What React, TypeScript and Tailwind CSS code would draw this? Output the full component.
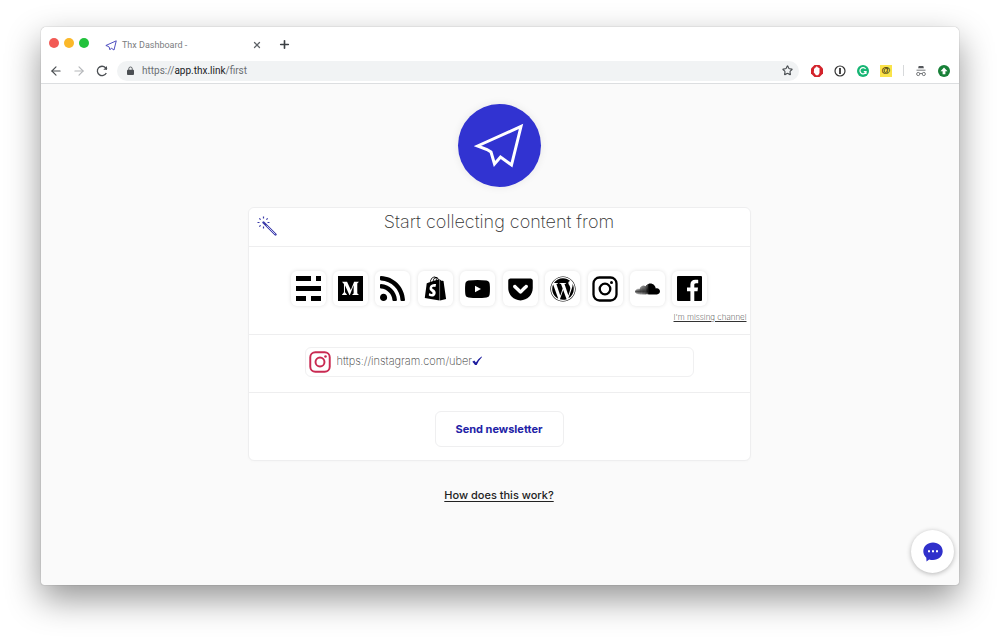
import React from "react";
import {
  FaMedium,
  FaRss,
  FaShopify,
  FaGetPocket,
  FaWordpress,
  FaSoundcloud,
} from "react-icons/fa";
import { ArrowLeft, ArrowRight, Plus, Star, X } from "lucide-react";

function PlaneIcon({ className, stroke }: { className: string; stroke: number }) {
  return (
    <svg viewBox="0 0 50 46" className={className} fill="none" stroke="currentColor" strokeWidth={stroke} aria-hidden="true">
      <path d="M3.500 23 47 3.500 37.500 42 26.500 34 20.500 41 17 29 13 26.500Z" />
    </svg>
  );
}

function TildaIcon() {
  return (
    <svg viewBox="0 0 25 25" className="size-[25px]" fill="currentColor" aria-hidden="true">
      <path d="M0 0h15v5H0zM20 0h5v5h-5zM0 10h25v5H0zM0 20h10v5H0zM15 20h10v5H15z" />
    </svg>
  );
}

function YoutubeIcon() {
  return (
    <svg viewBox="0 0 25 18" className="h-[18px] w-[25px]" aria-hidden="true">
      <path fill="currentColor" d="M3.500.5Q12.500-.500 21.500.500Q24.500 1 24.700 4Q25.200 9 24.700 14Q24.500 17 21.500 17.500Q12.500 18.500 3.500 17.500Q.5 17 .3 14Q-.2 9 .3 4Q.5 1 3.500.5Z" />
      <path fill="#fff" d="m10 5.800 6 3.200-6 3.200Z" />
    </svg>
  );
}

function InstagramIcon({ className }: { className: string }) {
  return (
    <svg viewBox="0 0 26 26" className={className} fill="none" stroke="currentColor" strokeWidth="2.300" aria-hidden="true">
      <rect x="1.500" y="1.500" width="23" height="23" rx="6" />
      <circle cx="13" cy="13" r="5.300" />
      <circle cx="19.500" cy="6.500" r="1.500" fill="currentColor" stroke="none" />
    </svg>
  );
}

function FacebookIcon() {
  return (
    <svg viewBox="0 0 25 25" className="size-[25px]" aria-hidden="true">
      <path fill="currentColor" d="M1 0h23q1 0 1 1v23q0 1-1 1H17.300v-9.700h3.200l.5-3.800h-3.700V9.100c0-1.100.3-1.800 1.900-1.800h2V3.900c-.4 0-1.500-.1-2.900-.1-2.900 0-4.900 1.700-4.900 5v2.700H10v3.800h3.400V25H1q-1 0-1-1V1q0-1 1-1Z" />
    </svg>
  );
}

function WandIcon() {
  return (
    <svg viewBox="0 0 20 20" className="size-5 text-[#3a3aa8]" fill="none" stroke="currentColor" aria-hidden="true">
      <path d="m6.500 6.500 12 12" strokeWidth="2.400" strokeLinecap="round" />
      <path d="m9.500 9.500 8.700 8.700" stroke="#c9c9f2" strokeWidth="1" />
      <path d="M6.500.5v2M6.500 10.500v2M.5 6.500h2M10.500 6.500h2M2.300 2.300l1.300 1.300M10.700 2.300 9.400 3.600M2.300 10.700l1.300-1.300" strokeWidth="1.200" />
    </svg>
  );
}

const channels: { name: string; icon: React.ReactNode }[] = [
  { name: "Tilda", icon: <TildaIcon /> },
  { name: "Medium", icon: <FaMedium className="h-[29px] w-[25px]" /> },
  { name: "RSS", icon: <FaRss className="h-[29px] w-[25px]" /> },
  { name: "Shopify", icon: <FaShopify className="size-[25px]" /> },
  { name: "YouTube", icon: <YoutubeIcon /> },
  { name: "Pocket", icon: <FaGetPocket className="h-[28px] w-[25px]" /> },
  { name: "WordPress", icon: <FaWordpress className="size-[26px]" /> },
  { name: "Instagram", icon: <InstagramIcon className="size-[26px]" /> },
  { name: "SoundCloud", icon: <FaSoundcloud className="h-5 w-[25px]" /> },
  { name: "Facebook", icon: <FacebookIcon /> },
];

function BrowserChrome() {
  return (
    <header className="border-b border-[#dcdee0] bg-white font-[Roboto,sans-serif]">
      <div className="flex h-[31px] items-end pb-1">
        <div className="flex w-[63px] gap-[5px] pb-[6px] pl-2">
          <span className="size-[10px] rounded-full bg-[#f25a55]" />
          <span className="size-[10px] rounded-full bg-[#fbb829]" />
          <span className="size-[10px] rounded-full bg-[#22c23c]" />
        </div>
        <div className="flex w-[160px] items-center text-[#7b7d80]">
          <PlaneIcon className="mr-[5px] ml-px h-[11px] w-3 text-[#4646bd]" stroke={4} />
          <span className="flex-1 text-[9px] leading-[18px]">Thx Dashboard -</span>
          <button aria-label="Close tab" className="mr-[2px] text-[#5f6368]">
            <X size={10} strokeWidth={3} />
          </button>
        </div>
        <button aria-label="New tab" className="mb-[3px] ml-[14px] text-[#3c4043]">
          <Plus size={13} strokeWidth={3} />
        </button>
      </div>
      <div className="flex h-[25px] items-center pr-[9px] pl-2 text-[#4b4f53]">
        <button aria-label="Back"><ArrowLeft size={14} /></button>
        <button aria-label="Forward" className="ml-[9px] text-[#b5b7ba]"><ArrowRight size={14} /></button>
        <button aria-label="Reload" className="ml-[9px]">
          <svg viewBox="0 0 14 14" className="size-[14px]" fill="none" stroke="currentColor" strokeWidth="1.300">
            <path d="M11.300 9a4.700 4.700 0 1 1-.8-5.300L12 5.200" />
            <path d="M12 2v3.700H8.300Z" fill="currentColor" stroke="none" />
          </svg>
        </button>
        <div className="ml-2 flex h-5 flex-1 items-center rounded-full bg-[#f1f3f4] pr-[6px] pl-[10px]">
          <svg viewBox="0 0 8 10" className="mr-2 h-[9px] w-[7px]" aria-hidden="true">
            <path fill="currentColor" d="M1 4h6q1 0 1 1v4q0 1-1 1H1Q0 10 0 9V5q0-1 1-1Z" />
            <path d="M2 4.500V3a2 2 0 0 1 4 0v1.500" fill="none" stroke="currentColor" />
          </svg>
          <span className="flex-1 text-[10px] text-[#6b6f73]">
            https://<span className="text-[#202124]">app.thx.link</span>/first
          </span>
          <button aria-label="Bookmark"><Star size={11} strokeWidth={2.5} /></button>
        </div>
        <div className="ml-3 flex items-center gap-[11px]">
          <svg viewBox="0 0 12 12" className="size-3" aria-hidden="true">
            <path fill="#d3232b" d="M3.500 0h5L12 3.500v5L8.500 12h-5L0 8.500v-5Z" />
            <path fill="#fff" d="M3 6V3.500h.9V2.400h1.200v-.9h1.200v.7h1.100v.9h1.100v5L7.200 10.200H5L2.700 7.200Z" />
          </svg>
          <svg viewBox="0 0 12 12" className="size-3" fill="none" stroke="#333" aria-hidden="true">
            <circle cx="6" cy="6" r="5" strokeWidth="1.200" />
            <path d="M6 3v6" strokeWidth="1.800" />
          </svg>
          <svg viewBox="0 0 12 12" className="size-3" fill="none" aria-hidden="true">
            <circle cx="6" cy="6" r="6" fill="#15b573" />
            <path d="M8.600 4A3.100 3.100 0 1 0 9 6.700H6.800M9 6.500v2.400" stroke="#fff" strokeWidth="1.200" />
          </svg>
          <span className="flex size-3 items-center justify-center bg-[#fae34a] font-['Liberation_Sans',sans-serif] text-[9px] leading-none font-bold text-[#2f2708]">@</span>
          <span className="h-[11px] w-px bg-[#d7d9db]" />
          <svg viewBox="0 0 12 12" className="size-3" fill="none" stroke="#6a6d70" strokeWidth=".9" aria-hidden="true">
            <path d="M3.700 1h4.600l.6 2.200H3.100Z" fill="#55585c" stroke="none" />
            <path d="M1.500 5.200h9M4.700 8.800q1.300-1 2.600 0" />
            <circle cx="3.200" cy="9" r="1.600" />
            <circle cx="8.800" cy="9" r="1.600" />
          </svg>
          <svg viewBox="0 0 12 12" className="size-3" aria-hidden="true">
            <circle cx="6" cy="6" r="6" fill="#188038" />
            <path d="m6 2.500 3.500 3.800H7.400v2.900H4.600V6.300H2.500Z" fill="#fff" />
          </svg>
        </div>
      </div>
    </header>
  );
}

export default function App() {
  return (
    <div className="flex min-h-screen bg-white px-[41px] pt-[27px] pb-[53px] font-[Inter,sans-serif]">
      <div className="relative flex flex-1 flex-col overflow-hidden rounded-[5px] rounded-b-[3px] bg-[#fafafa] shadow-[0_0_1px_rgba(0,0,0,0.5),0_14px_34px_rgba(0,0,0,0.42)]">
        <BrowserChrome />
        <main className="flex flex-1 flex-col items-center pt-5 pr-[2px]">
          <div className="flex size-[83px] items-center justify-center rounded-full bg-[#3133d1] shadow-[0_0_8px_rgba(0,0,0,0.08)]">
            <PlaneIcon className="h-[46px] w-[50px] text-white" stroke={3} />
          </div>

          <section className="mt-5 w-[503px] max-w-full divide-y divide-[#eeeeef] rounded-md border border-[#eeeeef] bg-white shadow-[0_1px_3px_rgba(0,0,0,0.02)]">
            <div className="grid h-[39px] grid-cols-[1fr_auto_1fr] items-start">
              <div className="pt-2 pl-2"><WandIcon /></div>
              <h1 className="pt-px text-[18px] leading-[26px] font-extralight text-[#333]">Start collecting content from</h1>
            </div>
            <div className="flex h-[88px] flex-col items-center pt-6">
              <div className="flex w-[417px] justify-between">
                {channels.map((c) => (
                  <button
                    key={c.name}
                    aria-label={c.name}
                    className="flex size-[35px] items-center justify-center rounded-md bg-white text-black shadow-[0_0_4px_rgba(0,0,0,0.12)]"
                  >
                    {c.icon}
                  </button>
                ))}
              </div>
              <a href="#missing" className="mt-[5px] mr-[3px] self-end text-[8px] leading-3 font-extralight text-[#333] underline">
                I'm missing channel
              </a>
            </div>
            <div className="flex h-[58px] justify-center pt-3">
              <label className="flex h-[30px] w-[389px] items-center rounded-md border border-[#f0f0f1] pl-[3px]">
                <InstagramIcon className="mr-[6px] size-[22px] text-[#c92a52]" />
                <input
                  aria-label="Instagram address"
                  defaultValue="https://instagram.com/uber"
                  className="[field-sizing:content] bg-transparent pb-[2px] text-[11px] leading-4 font-extralight text-[#333] outline-none"
                />
                <svg viewBox="0 0 10 10" className="mb-[2px] size-[10px] text-[#1b1b9e]" aria-hidden="true">
                  <path fill="currentColor" d="M.3 5.800 2.300 4.600 3.900 6.400Q6 2.700 9.600.4L10 .9Q6.800 4.100 4.700 9H3Q1.800 7 .3 5.800Z" />
                </svg>
              </label>
            </div>
            <div className="flex h-[67px] justify-center pt-[18px]">
              <button className="h-9 w-[129px] rounded-md border border-[#efeff0] bg-white text-[11px] font-bold text-[#2222a6]">
                Send newsletter
              </button>
            </div>
          </section>

          <a href="#how" className="mt-[26px] text-[11px] leading-4 font-medium text-[#222] underline underline-offset-2">
            How does this work?
          </a>
        </main>
        <button
          aria-label="Open chat"
          className="absolute right-[5px] bottom-3 flex size-[43px] items-center justify-center rounded-full bg-white shadow-[0_1px_5px_rgba(0,0,0,0.28)]"
        >
          <svg viewBox="0 0 20 20" className="size-5" aria-hidden="true">
            <path fill="#3030cb" d="M10 .5c5.500 0 9.700 3.700 9.700 8.800S15.500 18 10 18c-1.400 0-2.700-.2-3.800-.6L3.500 19.600 3.300 15.700C1.400 14.100.3 11.900.3 9.300.3 4.200 4.500.5 10 .5Z" />
            <path fill="#fff" d="M5 8.300h2v2H5zM9 8.300h2v2H9zM13 8.300h2v2h-2z" />
          </svg>
        </button>
      </div>
    </div>
  );
}
